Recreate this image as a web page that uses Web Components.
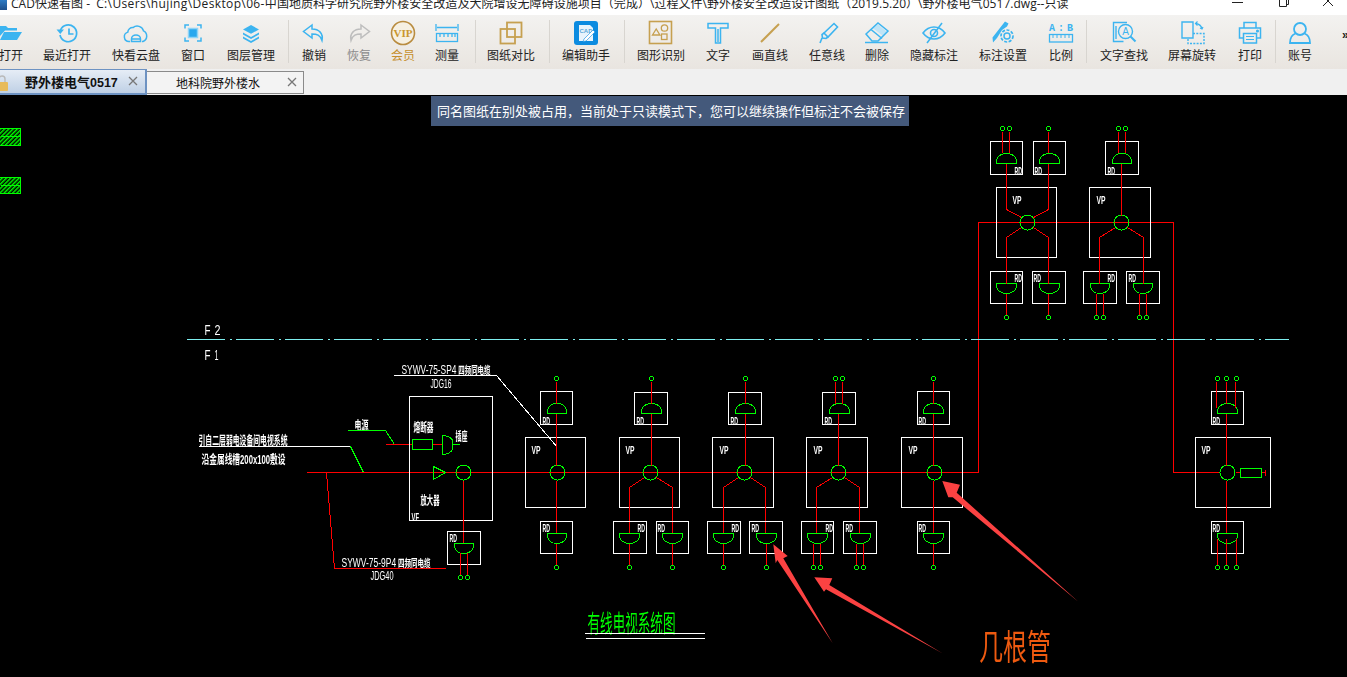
<!DOCTYPE html>
<html><head><meta charset="utf-8">
<style>
html,body{margin:0;padding:0;width:1347px;height:677px;overflow:hidden;background:#000}
body{font-family:"Open Sans","Noto Sans CJK SC",sans-serif}
</style></head><body>
<cad-app>
<title-bar>CAD快速看图 -<span style="margin-left:6px;letter-spacing:.37px">C:\Users\hujing\Desktop\06-</span>中国地质科学研究院野外楼安全改造及大院增设无障碍设施项目（完成）\过程文件\野外楼安全改造设计图纸（2019.5.20）\野外楼电气0517.dwg--只读</title-bar>
<tool-bar>
<tool-item w="42" first><svg slot="icon" width="26" height="24" viewBox="0 0 26 24"><path fill="#3cb4f0" d="M2 5h6l2 2h9v2.500H7L2 15z"/><path fill="#3cb4f0" d="M6 11h18l-5 8H2z"/></svg>打开</tool-item>
<tool-item w="70"><svg slot="icon" width="26" height="24" viewBox="0 0 26 24" fill="none" stroke="#3cb4f0" stroke-width="1.700"><path d="M6.500 9A8.400 8.400 0 1 1 6 14"/><path fill="#3cb4f0" stroke="none" d="M2.500 8.500h7.500l-3.700 4.500z"/><path d="M15 7.500v5.500h4.500"/></svg>最近打开</tool-item>
<tool-item w="68"><svg slot="icon" width="26" height="24" viewBox="0 0 26 24" fill="none" stroke="#3cb4f0" stroke-width="1.500"><path d="M7 20.500H6a4.800 4.800 0 0 1-1.200-9.400 4.800 4.800 0 0 1 5.200-4.500 6.500 6.500 0 0 1 10.500 3.300A5.800 5.800 0 0 1 20 20.500h-1"/><path d="M8.500 20.500v-2.500a4.500 4 0 0 1 9 0v2.500zM8.500 18h9"/></svg>快看云盘</tool-item>
<tool-item w="46"><svg slot="icon" width="26" height="24" viewBox="0 0 26 24" fill="none" stroke="#3cb4f0" stroke-width="1.500"><rect x="8.500" y="7.500" width="9" height="9" fill="#2aa8ee" stroke="#8fd4f6"/><path d="M5 7.500V4h4M17 4h4v3.500M21 16.500V20h-4M9 20H5v-3.500"/></svg>窗口</tool-item>
<tool-item w="70"><svg slot="icon" width="26" height="24" viewBox="0 0 26 24" fill="#3cb4f0"><path d="M13 4l8 4.400-8 4.400-8-4.400z"/><path d="M5 11.500l8 4.400 8-4.400v2l-8 4.400-8-4.400z"/><path d="M5 15.500l8 4.400 8-4.400v2l-8 4.400-8-4.400z"/></svg>图层管理</tool-item>
<tool-sep m="2"></tool-sep>
<tool-item w="50"><svg slot="icon" width="26" height="24" viewBox="0 0 26 24" fill="none" stroke="#3cb4f0" stroke-width="1.500"><path d="M11 4L2.500 10.500 11 17v-4c5 0 8 1 10 6.500 1.500-7-3-11.500-10-11.500z"/></svg>撤销</tool-item>
<tool-item w="40" off><svg slot="icon" width="26" height="24" viewBox="0 0 26 24" fill="none" stroke="#bdbdbd" stroke-width="1.500"><path d="M15 4l8.500 6.500L15 17v-4c-5 0-8 1-10 6.500C3.500 12.500 8 8 15 8z"/></svg>恢复</tool-item>
<tool-item w="48" gold><svg slot="icon" width="26" height="26" viewBox="0 0 26 26"><circle cx="13" cy="13" r="11.500" fill="#f6f0e2" stroke="#b98c40" stroke-width="1.600"/><text x="13" y="16.500" text-anchor="middle" font-family="Liberation Serif" font-weight="700" font-size="11" fill="#c9962e">VIP</text></svg>会员</tool-item>
<tool-item w="40"><svg slot="icon" width="26" height="24" viewBox="0 0 26 24" fill="none" stroke="#3cb4f0" stroke-width="1.300"><path d="M2 3v7M24 3v7M3 6.500h20"/><rect x="2.500" y="12.500" width="21" height="8"/><path d="M6 13v3M10 13v3M14 13v3M18 13v3M21 13v3"/></svg>测量</tool-item>
<tool-sep m="8"></tool-sep>
<tool-item w="70"><svg slot="icon" width="26" height="24" viewBox="0 0 26 24" fill="none" stroke="#c6a050" stroke-width="1.800"><rect x="9" y="1.500" width="14.500" height="14.500"/><rect x="2.500" y="8" width="14.500" height="14.500"/></svg>图纸对比</tool-item>
<tool-sep m="3"></tool-sep>
<tool-item w="72"><svg slot="icon" width="26" height="24" viewBox="0 0 26 24"><rect x="1" y="0" width="24" height="24" rx="3" fill="#0b8be0"/><path d="M6 4h11l3 3v13H6z" fill="#e8f4fc"/><text x="6.500" y="12" font-family="Liberation Sans" font-size="6" font-weight="700" fill="#5aa7d8">CAD</text><path d="M11 18l9-9 2 2-9 9-3 .5z" fill="#fff" stroke="#0b8be0" stroke-width=".6"/></svg>编辑助手</tool-item>
<tool-sep m="2"></tool-sep>
<tool-item w="72"><svg slot="icon" width="26" height="24" viewBox="0 0 26 24" fill="none" stroke="#c6a050" stroke-width="1.300"><rect x="1.500" y="0.500" width="22" height="22" stroke-width="1.600"/><path d="M4.500 14l3.700-6 3.700 6z"/><circle cx="16.500" cy="7" r="3.200"/><rect x="13.500" y="13" width="5.500" height="5.500"/></svg>图形识别</tool-item>
<tool-item w="42"><svg slot="icon" width="26" height="24" viewBox="0 0 26 24" fill="none" stroke="#3cb4f0" stroke-width="1.500"><path d="M3 2.500h20v4.500h-7.500v15h-5V7H3z"/><path d="M13 8v13"/></svg>文字</tool-item>
<tool-item w="62"><svg slot="icon" width="26" height="24" viewBox="0 0 26 24" fill="none" stroke="#c6a050" stroke-width="2"><path d="M4 21L22 3"/></svg>画直线</tool-item>
<tool-item w="52"><svg slot="icon" width="26" height="24" viewBox="0 0 26 24" fill="none" stroke="#3cb4f0" stroke-width="1.600"><path d="M10 12L20 2.500l3.500 3.500L14 16z"/><path d="M10 12l-2 1.500.5 3.500 3.500.5 2-1.500"/><path d="M8 17l-2 5"/></svg>任意线</tool-item>
<tool-item w="48"><svg slot="icon" width="26" height="24" viewBox="0 0 26 24" fill="none" stroke="#3cb4f0" stroke-width="1.500"><path d="M14 3.500l8.500 7-4 4-10-7.500z" fill="#bfe4f7" stroke="none"/><path d="M2 13L14 2l10 8-10 10H8z"/><path d="M7 8.500l11 9"/><path d="M1 21.500h23"/></svg>删除</tool-item>
<tool-item w="66"><svg slot="icon" width="26" height="24" viewBox="0 0 26 24" fill="none" stroke="#3cb4f0" stroke-width="1.600"><path d="M2 12c6-8 16-8 22 0-6 8-16 8-22 0z"/><circle cx="13" cy="12" r="3.500"/><path d="M21 2L6 22"/></svg>隐藏标注</tool-item>
<tool-item w="72"><svg slot="icon" width="26" height="24" viewBox="0 0 26 24" fill="none" stroke="#3cb4f0"><path fill="#3cb4f0" stroke="none" d="M15 .5l3.500 2-1.500 3-5 3.500-5 8-4 4.500-.5-5z"/><circle cx="17" cy="15" r="3" stroke-width="1.500"/><circle cx="17" cy="15" r="6" stroke-width="1.700" stroke-dasharray="3 1.500"/></svg>标注设置</tool-item>
<tool-item w="44"><svg slot="icon" width="26" height="24" viewBox="0 0 26 24"><text x="1" y="10" textLength="24" font-family="Liberation Mono" font-weight="700" font-size="10" fill="#3cb4f0">A:B</text><rect x="1.500" y="13.500" width="23" height="7.500" fill="none" stroke="#3cb4f0" stroke-width="1.300"/><path d="M5 14v3M9 14v3M13 14v3M17 14v3M21 14v3" stroke="#3cb4f0"/></svg>比例</tool-item>
<tool-sep m="3"></tool-sep>
<tool-item w="74"><svg slot="icon" width="26" height="24" viewBox="0 0 26 24" fill="none" stroke="#3cb4f0" stroke-width="1.400"><path d="M16 1.500H2.500v19h10"/><path d="M5 5v13"/><circle cx="14.500" cy="10.500" r="7"/><path d="M19.500 15.500l5 5" stroke-width="2"/><text x="14.500" y="14" text-anchor="middle" font-family="Liberation Sans" font-size="10" fill="#3cb4f0" stroke="none">A</text></svg>文字查找</tool-item>
<tool-item w="62"><svg slot="icon" width="26" height="24" viewBox="0 0 26 24" fill="none" stroke="#3cb4f0" stroke-width="1.400"><path d="M14 17H3V1h11z"/><path d="M14 12.500h11v10H9v-5" stroke-dasharray="2 1.300"/><path d="M17 2.500c3 .5 5 2 6 5"/><path d="M18.500 .5l-2 2 2 2M21 7l2 1 1-2" stroke-width="1.200"/></svg>屏幕旋转</tool-item>
<tool-item w="54"><svg slot="icon" width="26" height="24" viewBox="0 0 26 24" fill="none" stroke="#3cb4f0" stroke-width="1.500"><path d="M7 7V1.500h12V7"/><path d="M6 17H2.500V7h21v10H20"/><rect x="6.500" y="12.500" width="13" height="9.500"/><path d="M9 15.500h8M9 18.500h8" stroke-width="1"/><circle cx="20.500" cy="10" r=".8"/></svg>打印</tool-item>
<tool-sep m="-2"></tool-sep>
<tool-item w="48"><svg slot="icon" width="26" height="24" viewBox="0 0 26 24" fill="none" stroke="#3cb4f0" stroke-width="1.800"><circle cx="13" cy="8" r="6"/><path d="M8.500 12.500C4 14 3 17.500 3 22h20c0-4.500-1-8-5.500-9.500"/></svg>账号</tool-item>
<more-btn>»</more-btn>
</tool-bar>
<tab-bar>
<doc-tab active w="147"><svg slot="lead" width="11" height="18" viewBox="0 0 11 18"><path d="M1 8V5a3 3 0 0 1 6 0v3" fill="none" stroke="#b9b9b9" stroke-width="1.400"/><rect x="-2" y="8" width="12" height="9" rx="1" fill="#e8bb5a"/></svg>野外楼电气<span style="font:700 12.500px 'Liberation Sans',sans-serif">0517</span></doc-tab>
<doc-tab w="157">地科院野外楼水</doc-tab>
</tab-bar>
<cad-canvas>同名图纸在别处被占用，当前处于只读模式下，您可以继续操作但标注不会被保存</cad-canvas>
</cad-app>
<script>
const T=(s)=>{const t=document.createElement('template');t.innerHTML=s;return t};
function reg(name,html){
  const tpl=T(html);
  customElements.define(name,class extends HTMLElement{
    constructor(){super();this.attachShadow({mode:'open'}).appendChild(tpl.content.cloneNode(true));}
  });
}
reg('cad-app',`<style>:host{display:flex;flex-direction:column;width:1347px;height:677px;overflow:hidden}</style><slot></slot>`);
reg('title-bar',`<style>
:host{display:flex;height:15px;background:#fff;overflow:hidden;color:#222;font-size:12px}
.w{display:flex;align-items:center;height:18px;margin-top:-5px;width:100%}
.ic{width:7px;height:11px;margin:0 4px 0 0;background:linear-gradient(#2f7fc9,#1c4e8a);flex:none}
.t{white-space:nowrap;flex:none;width:1179px;line-height:18px;letter-spacing:.035px}
.c{display:flex;margin-left:42px;flex:none}
.c svg{display:block}
</style><div class="w"><span class="ic"></span><span class="t"><slot></slot></span>
<span class="c"><svg width="45" height="18" viewBox="0 0 45 18"><path d="M0 7.500h11" stroke="#222"/></svg><svg width="45" height="18" viewBox="0 0 45 18"><path d="M2.500 4.500h7v7h-7zM4.500 4V2.500h7v7H10" fill="none" stroke="#222"/></svg><svg width="20" height="18" viewBox="0 0 20 18"><path d="M1 1l10 10M11 1L1 11" stroke="#222" fill="none"/></svg></span></div>`);
reg('tool-bar',`<style>:host{display:flex;height:54px;background:linear-gradient(#f3f2f0,#e9e5e0);overflow:hidden;flex:none}</style><slot></slot>`);
customElements.define('tool-item',class extends HTMLElement{
  constructor(){super();const s=this.attachShadow({mode:'open'});
    s.innerHTML=`<style>:host{display:flex;flex-direction:column;align-items:center;flex:none;height:54px;color:#222;font-size:12px;white-space:nowrap}
    :host([off]){color:#8b8b8b}:host([gold]){color:#c58f2c}
    .ic{height:24px;margin-top:6px;display:flex;align-items:center;justify-content:center}
    .ic ::slotted(svg){display:block;overflow:visible}
    .l{margin-top:2px;line-height:18px;height:18px}</style>
    <div class="ic"><slot name="icon"></slot></div><div class="l"><slot></slot></div>`;}
  connectedCallback(){this.style.width=this.getAttribute('w')+'px';if(this.hasAttribute('first'))this.style.marginLeft='-10px'}
});
customElements.define('tool-sep',class extends HTMLElement{
  constructor(){super();this.attachShadow({mode:'open'}).innerHTML=`<style>:host{display:block;flex:none;width:1px;height:43px;margin-top:5px;background:#d8d5d0}</style>`}
  connectedCallback(){const m=this.getAttribute('m');if(m!==null)this.style.marginLeft=m+'px'}
});
reg('more-btn',`<style>:host{display:block;flex:none;margin-left:18px;margin-top:8px;font:700 12px "Liberation Sans",sans-serif;color:#222;line-height:24px}</style><slot></slot>`);
reg('tab-bar',`<style>:host{display:flex;align-items:flex-start;height:26px;background:#f0f0f0;flex:none;overflow:hidden}</style><slot></slot>`);
customElements.define('doc-tab',class extends HTMLElement{
  constructor(){super();this.attachShadow({mode:'open'}).innerHTML=`<style>
  :host{display:flex;align-items:center;justify-content:center;box-sizing:border-box;height:23px;margin-top:2px;border:1px solid #8a8a8a;border-left:0;background:#f3f3f3;color:#111;font-size:12px;position:relative;flex:none;padding-right:14px}
  :host([active]){height:26px;margin-top:0;background:linear-gradient(#e6edf6,#bfd0e5);border:2px solid #6d92c2;border-left:0;border-width:1px 2px 2px 0;font:700 13px "Noto Sans CJK SC",sans-serif;padding-right:0;justify-content:flex-start;padding-left:25px}
  .x{position:absolute;right:5px;top:4px;width:12px;height:12px}
  :host([active]) .x{right:6px;top:5px}
  .lead{position:absolute;left:-2px;top:4px}
  </style><span class="lead"><slot name="lead"></slot></span><span class="t"><slot></slot></span><svg class="x" viewBox="0 0 12 12"><path d="M2 2l8 8M10 2l-8 8" stroke="#777" stroke-width="1.300" fill="none"/></svg>`}
  connectedCallback(){this.style.width=this.getAttribute('w')+'px'}
});
customElements.define('cad-canvas',class extends HTMLElement{
  constructor(){super();const s=this.attachShadow({mode:'open'});
  const R='#ff0000',G='#00ff00',W='#ffffff';
  let o='';
  const line=(c,...p)=>{o+=`<polyline fill="none" stroke="${c}" points="${p.join(' ')}"/>`};
  const r=(...p)=>line(R,...p), w=(...p)=>line(W,...p), g=(...p)=>line(G,...p);
  const box=(x1,y1,x2,y2,c=W)=>{o+=`<rect x="${x1}" y="${y1}" width="${x2-x1}" height="${y2-y1}" fill="none" stroke="${c}"/>`};
  const circ=(x,y,rr)=>{ if(rr){o+=`<circle cx="${x}" cy="${y}" r="${rr}" fill="none" stroke="${G}"/>`}
    else {o+=`<path transform="translate(${x} ${y})" d="M-1 -2H1L2 -1V1L1 2H-1L-2 1V-1Z" fill="none" stroke="${G}"/>`} };
  const domeU=(a,b,y=413)=>{o+=`<path d="M${a} ${y}H${b}V${y-3}A${(b-a)/2} 7 0 0 0 ${a} ${y-3}Z" fill="none" stroke="${G}"/>`};
  const domeD=(a,b,y=533)=>{o+=`<path d="M${a} ${y}H${b}V${y+3}A${(b-a)/2} 7 0 0 1 ${a} ${y+3}Z" fill="none" stroke="${G}"/>`};
  const tx=(x,y,str,len,size=9,fill=W,extra='')=>{o+=`<text x="${x}" y="${y}" textLength="${len}" lengthAdjust="spacingAndGlyphs" font-size="${size}" fill="${fill}" stroke="none" ${extra}>${str}</text>`};
  const lb=(x,y,str='RD')=>tx(x,y,str,7.500,10,W,'font-weight="700"');
  const cj='font-family="Noto Sans CJK SC" font-weight="700"';
  const cab=(x,y,a,len)=>tx(x,y,`${a}<tspan font-size="10" font-weight="700"> 四频同电缆</tspan>`,len,13);

  r('306,472','978,472','978,222','1173,222','1173,472','1219,472');
  r('1235,472','1240,472');
  o+=`<path d="M186 339H1288" stroke="#7eeeee" stroke-dasharray="38 5 2 4" fill="none"/>`;
  tx(204,334,'F',6,15); tx(214,334,'2',6,15);
  tx(204,359,'F',6,15); tx(214,359,'1',4,15);
  tx(198,444,'引自二层弱电设备间电视系统',89,12,W,cj);
  w('198,446','350,446'); g('350,446','363,472');
  tx(201,463,'沿金属线槽200x100敷设',84,12,W,cj);
  tx(354,429,'电源',14,12,W,cj);
  g('347,430','385,430','394,444'); r('385,444','412,444'); box(412,439,432,449,G); r('432,444','442,444');
  o+=`<path d="M442 435Q454 436 452 444Q454 453 442 454Z" fill="none" stroke="${G}"/>`; g('452,444','459,444');
  box(409,396,492,520);
  tx(413,431,'熔断器',20,12,W,cj); tx(455,440,'插座',12,12,W,cj); tx(420,504,'放大器',19,12,W,cj);
  lb(411,520,'VF');
  o+=`<path d="M433 466V479L445 472Z" fill="none" stroke="${G}"/>`; circ(463,472,7.5);
  r('463,480','463,543'); box(447,531,480,564); lb(449,541); domeD(454,473,543);
  r('460,552','460,574'); r('467,552','467,574'); circ(460,577); circ(467,577);
  r('326,472','334,568','445,568');
  cab(341,566,'SYWV-75-9P4',89);
  tx(370,579,'JDG40',23,13);
  w('393,375','496,375','557,447');
  cab(401,373,'SYWV-75-SP4',89);
  tx(430,387,'JDG16',21,13);
  const cols=[
   {c:557,box:[525,585],top:[540,572,547,566,556,542],vp:531,tops:[556],bot:[{b:[540,572],d:[547,566],l:542,x:[556]}],single:true},
   {c:650,box:[619,679],top:[634,667,641,661,651,636],vp:625,tops:[651],br:[629,672],bot:[{b:[613,646],d:[619,639],l:637,x:[629]},{b:[656,688],d:[662,682],l:657,x:[672]}]},
   {c:744,box:[712,773],top:[728,761,735,755,745,730],vp:719,tops:[745],br:[723,765],bot:[{b:[707,740],d:[713,733],l:731,x:[723]},{b:[749,782],d:[756,776],l:751,x:[766]}]},
   {c:838,box:[806,867],top:[822,855,829,849,838,824],vp:813,tops:[835,842],br:[816,859],bot:[{b:[801,833],d:[807,827],l:825,x:[813,820]},{b:[843,876],d:[850,870],l:845,x:[856,863]}]},
   {c:934,box:[901,962],top:[917,949,923,943,933,918],vp:908,tops:[933],bot:[{b:[917,949],d:[923,943],l:918,x:[933]}],single:true},
  ];
  for(const k of cols){
    box(k.box[0],437,k.box[1],507); tx(k.vp,453,'VP',9,11,W,'font-weight="700"');
    circ(k.c,472,7.5);
    const [a,b,d1,d2,mx,lx]=k.top;
    box(a,k.c===557||k.c===934?391:392,b,424); domeU(d1,d2,413); lb(lx,424);
    for(const x of k.tops){circ(x,378); r(`${x},381`,`${x},403`);}
    r(`${mx},413`,`${mx},465`);
    if(k.single){ r(`${k.bot[0].x[0]},480`,`${k.bot[0].x[0]},533`); }
    if(k.br){ const[L,Rr]=k.br;
      r(`${k.c-6},477`,`${L},487`,`${L},533`); r(`${k.c+6},477`,`${Rr},487`,`${Rr},533`);
    }
    for(const q of k.bot){
      box(q.b[0],521,q.b[1],553); domeD(q.d[0],q.d[1],533); lb(q.l,531);
      for(const x of q.x){ r(`${x},543`,`${x},564`); circ(x,567); }
    }
  }
  box(1195,437,1270,507); tx(1201,453,'VP',9,11,W,'font-weight="700"'); circ(1227,472,7.5);
  box(1211,391,1243,424); domeU(1217,1237,413); lb(1212,424);
  for(const x of [1217,1226,1236]){circ(x,378);} r('1216,381','1216,407'); r('1226,381','1226,403'); r('1235,381','1235,407');
  r('1226,413','1226,465'); r('1226,480','1226,533');
  box(1240,468,1261,477,G); r('1261,472','1265,472'); r('1265,469','1265,475');
  box(1211,521,1243,553); domeD(1217,1237,533); lb(1212,531);
  for(const x of [1217,1226,1236]){ r(`${x},538`,`${x},564`); circ(x,567);}
  const tbox=(a,b,d1,d2,lx)=>{box(a,141,b,174); domeU(d1,d2,163); lb(lx,174)};
  const bbox=(a,b,d1,d2,lx)=>{box(a,271,b,303); domeD(d1,d2,283); lb(lx,281)};
  box(996,187,1056,257); tx(1012,203,'VP',9,11,W,'font-weight="700"'); circ(1027,222,7.5);
  box(1089,187,1150,257); tx(1096,203,'VP',9,11,W,'font-weight="700"'); circ(1121,222,7.5);
  tbox(990,1022,996,1016,1014); tbox(1033,1065,1039,1059,1034); tbox(1105,1138,1112,1131,1107);
  bbox(990,1022,996,1016,1014); bbox(1032,1065,1039,1059,1033); bbox(1083,1116,1090,1109,1107); bbox(1126,1159,1133,1152,1128);
  circ(1002,128);circ(1009,128);circ(1048,128);circ(1118,128);circ(1125,128);
  r('1002,131','1002,152'); r('1009,131','1009,152'); r('1048,131','1048,152'); r('1118,131','1118,152'); r('1125,131','1125,152');
  r('1006,163','1006,209','1021,217'); r('1048,163','1048,209','1033,217');
  r('1121,163','1121,215');
  r('1021,227','1006,237','1006,283'); r('1033,227','1048,237','1048,283');
  r('1115,227','1099,237','1099,283'); r('1127,227','1143,237','1143,283');
  r('1006,293','1006,314'); r('1048,293','1048,314'); circ(1006,317); circ(1048,317);
  for(const x of [1096,1103,1139,1146]){ r(`${x},293`,`${x},314`); circ(x,317);}
  tx(587,631,'有线电视系统图',88,24,G,'font-family="Noto Sans CJK SC" font-weight="400"');
  w('584,633','704,633'); w('585,638','704,638');
  o+=`<rect x="-1" y="128" width="21" height="17" fill="url(#h)" stroke="${G}"/><path d="M0 136H20" stroke="${G}"/>`;
  o+=`<rect x="-1" y="177" width="21" height="16" fill="url(#h)" stroke="${G}"/><path d="M0 185H20" stroke="${G}"/>`;
  const A=(p)=>`<polygon fill="#fb4242" points="${p.map(([x,y])=>(570+x/3).toFixed(1)+','+(480+y/3).toFixed(1)).join(' ')}"/>`;
  const arrows=A([[1117,3],[1170,14],[1160,38],[1525,365],[1148,52],[1135,52]])+A([[733,292],[787,295],[778,315],[1117,520],[768,328],[762,335]])+A([[610,193],[653,228],[640,235],[788,490],[622,240],[617,250]]);
  s.innerHTML=`<style>
  :host{display:block;position:relative;flex:1;background:#000;overflow:hidden}
  svg{display:block;will-change:transform}
  svg text{font-family:"Liberation Sans","Noto Sans CJK SC",sans-serif}
  .n{position:absolute;left:431px;top:1px;width:478px;height:30px;box-sizing:border-box;padding-left:2px;background:#44597b;color:#fff;font:13px/30px "Noto Sans CJK SC",sans-serif;text-align:center;white-space:nowrap}
  </style>
  <svg width="1347" height="582" viewBox="0 95 1347 582">
  <defs><pattern id="h" width="3" height="3" patternUnits="userSpaceOnUse" patternTransform="rotate(45)"><rect width="3" height="3" fill="#000"/><rect width="1.500" height="3" fill="#0f0"/></pattern></defs>
  <g shape-rendering="crispEdges" transform="translate(.5 .5)">${o}</g>
  ${arrows}
  <text x="979" y="660" textLength="72" lengthAdjust="spacingAndGlyphs" font-size="35" font-weight="400" fill="#ee5a10" style='font-family:"Noto Sans CJK SC",sans-serif'>几根管</text>
  </svg>
  <div class="n"><slot></slot></div>`;
  }
});
</script>
</body></html>
